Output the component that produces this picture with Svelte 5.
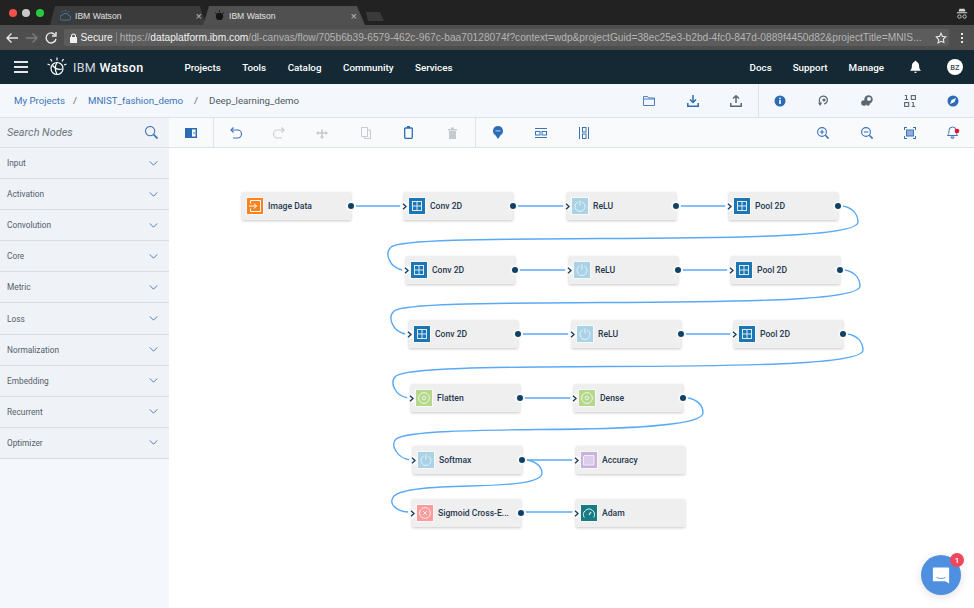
<script lang="ts">
	const palette = ['Input', 'Activation', 'Convolution', 'Core', 'Metric', 'Loss', 'Normalization', 'Embedding', 'Recurrent', 'Optimizer'];
	const primary = ['Projects', 'Tools', 'Catalog', 'Community', 'Services'];
	const secondary = ['Docs', 'Support', 'Manage'];

	// page coordinates of each node's top left corner
	const nodes = [
		{ label: 'Image Data', kind: 'data', x: 242, y: 192, input: false },
		{ label: 'Conv 2D', kind: 'grid', x: 404, y: 192 },
		{ label: 'ReLU', kind: 'power', x: 567, y: 192 },
		{ label: 'Pool 2D', kind: 'grid', x: 729, y: 192 },
		{ label: 'Conv 2D', kind: 'grid', x: 406, y: 256 },
		{ label: 'ReLU', kind: 'power', x: 569, y: 256 },
		{ label: 'Pool 2D', kind: 'grid', x: 731, y: 256 },
		{ label: 'Conv 2D', kind: 'grid', x: 409, y: 320 },
		{ label: 'ReLU', kind: 'power', x: 572, y: 320 },
		{ label: 'Pool 2D', kind: 'grid', x: 734, y: 320 },
		{ label: 'Flatten', kind: 'target', x: 411, y: 384 },
		{ label: 'Dense', kind: 'target', x: 574, y: 384 },
		{ label: 'Softmax', kind: 'power', x: 413, y: 446 },
		{ label: 'Accuracy', kind: 'square', x: 576, y: 446, output: false },
		{ label: 'Sigmoid Cross-E...', kind: 'cross', x: 412, y: 499 },
		{ label: 'Adam', kind: 'gauge', x: 576, y: 499, output: false }
	];

	const links = [
		'M355 206H401',
		'M517 206H564',
		'M680 206H726',
		'M842 206C852 207 858 214 858 222C858 235 770 238 600 238.5C480 239 400 240 391 247C384 254 390 268 403 270',
		'M519 270H566',
		'M682 270H728',
		'M844 270C854 271 860 278 860 286C860 299 772 302 602 302.5C482 303 403 304 394 311C387 318 393 332 406 334',
		'M522 334H569',
		'M685 334H731',
		'M847 334C857 335 863 342 863 350C863 363 775 366 605 366.5C490 367 405 368 396 376C389 382 395 396 408 398',
		'M524 398H571',
		'M687 398C697 399 703 405 703 413C703 426 625 429 540 429.5C480 430 405 431 396 439C390 445 397 458 410 460',
		'M526 460H573',
		'M526 460C536 461 542 467 542 473C542 483 510 485 470 486C430 487 402 489 394 496C388 503 395 511 408 512',
		'M525 512H573'
	];
</script>

<div class="page">
	<div class="tabstrip">
		<div class="lights"><i class="red"></i><i class="amber"></i><i class="green"></i></div>
		<div class="tab">
			<svg width="11" height="11" viewBox="0 0 12 12" fill="none" stroke="#3f7fb5"><path d="M2 11h7a2.500 2.500 0 0 0 .5-5A3.500 3.500 0 0 0 3 5.500 2.800 2.800 0 0 0 2 11z" /><path d="M6 0v1.500M2 1l1 1.500M10 1L9 2.500" /></svg>
			<span>IBM Watson</span><b>×</b>
		</div>
		<div class="tab active">
			<svg width="11" height="11" viewBox="0 0 12 12" fill="#161616"><circle cx="6" cy="7" r="4" /><path d="M1 3l2 1M11 3L9 4M6 0v2" stroke="#161616" /></svg>
			<span>IBM Watson</span><b>×</b>
		</div>
		<div class="newtab"></div>
		<svg class="incognito" width="12" height="12" viewBox="0 0 14 14" fill="#d8d8d8"><path d="M4 1h6l1 3H3zM1 5h12v1H1z" /><circle cx="4" cy="10" r="2" fill="none" stroke="#d8d8d8" /><circle cx="10" cy="10" r="2" fill="none" stroke="#d8d8d8" /></svg>
	</div>

	<div class="addressbar">
		<svg width="14" height="14" viewBox="0 0 14 14" fill="none" stroke="#e8e8e8" stroke-width="1.400"><path d="M13 7H2M6.500 2.500L2 7l4.500 4.500" /></svg>
		<svg width="14" height="14" viewBox="0 0 14 14" fill="none" stroke="#7d7d7d" stroke-width="1.400"><path d="M1 7h11M7.500 2.500L12 7l-4.500 4.500" /></svg>
		<svg width="14" height="14" viewBox="0 0 14 14" fill="none" stroke="#e8e8e8" stroke-width="1.400"><path d="M11.500 4.500A5 5 0 1 0 12 8" /><path d="M12 1v4H8" /></svg>
		<div class="omnibox">
			<svg width="9" height="10" viewBox="0 0 9 10" fill="#f0f0f0"><path d="M2 4V3a2.500 2.500 0 0 1 5 0v1h1v6H1V4zm1 0h3V3a1.500 1.500 0 0 0-3 0z" /></svg>
			<span class="secure">Secure</span>
			<span class="url"><em>https://</em>dataplatform.ibm.com<em>/dl-canvas/flow/705b6b39-6579-462c-967c-baa70128074f?context=wdp&amp;projectGuid=38ec25e3-b2bd-4fc0-847d-0889f4450d82&amp;projectTitle=MNIS...</em></span>
			<svg width="12" height="12" viewBox="0 0 14 14" fill="none" stroke="#e8e8e8" stroke-width="1.300"><path d="M7 1.500l1.700 3.600 3.800.5-2.800 2.700.7 3.900L7 10.800l-3.400 1.900.7-3.900L1.500 5.600l3.800-.5z" /></svg>
		</div>
		<div class="kebab"><i></i><i></i><i></i></div>
	</div>

	<header class="navbar">
		<div class="burger"><i></i><i></i><i></i></div>
		<svg class="logo" width="20" height="20" viewBox="0 0 20 20" fill="none" stroke="#fff" stroke-width="1.200"><circle cx="10" cy="11.500" r="6" /><path d="M5.500 8.500c3 3.500 6 4.500 9.500 3.500M10 5.500c-2 3-2 8 0 12M10 .5v3M3.500 2l1.500 2.500M16.500 2L15 4.500M.5 7l2.500 1M19.500 7l-2.500 1" /></svg>
		<div class="brand">IBM <strong>Watson</strong></div>
		<nav class="primary">
			{#each primary as item}<span>{item}</span>{/each}
		</nav>
		<nav class="secondary">
			{#each secondary as item}<span>{item}</span>{/each}
		</nav>
		<svg class="bell" width="11" height="14" viewBox="0 0 13 15" fill="#fff"><path d="M6.500 0a1.200 1.200 0 0 1 1.200 1.300C10 2 10.800 4 10.800 6.500c0 2.500.7 3.800 2.200 5.500H0c1.500-1.700 2.200-3 2.200-5.500S3 2 5.300 1.300A1.200 1.200 0 0 1 6.500 0zM5 13h3a1.500 1.500 0 0 1-3 0z" /></svg>
		<div class="avatar">BZ</div>
	</header>

	<div class="crumbbar">
		<div class="crumbs">
			<a class="root" href="#top">My Projects</a><span class="sep">/</span><a href="#top">MNIST_fashion_demo</a><span class="sep">/</span><span class="current">Deep_learning_demo</span>
		</div>
		<div class="slots crumb-actions">
			<svg width="12" height="10" viewBox="0 0 12 10" fill="none" stroke="#4a7fc1" stroke-width="1"><path d="M.5 9.500V.5h4l1 1.500h6v7.500zM.5 3h11" /></svg>
			<svg width="12" height="12" viewBox="0 0 12 12" fill="none" stroke="#2f6db5" stroke-width="1.500"><path d="M6 0v7M3 4.500L6 7.500l3-3" /><path d="M.8 8v3.200h10.400V8" /></svg>
			<svg width="12" height="12" viewBox="0 0 12 12" fill="none" stroke="#5c6670" stroke-width="1.500"><path d="M6 8V1M3 3.500L6 .8l3 2.700" /><path d="M.8 8v3.200h10.400V8" /></svg>
		</div>
		<div class="slots crumb-tools">
			<svg width="12" height="12" viewBox="0 0 12 12"><circle cx="6" cy="6" r="5.500" fill="#2c6cb5" /><rect x="5.200" y="5" width="1.600" height="4" fill="#fff" /><rect x="5.200" y="2.700" width="1.600" height="1.500" fill="#fff" /></svg>
			<svg width="12" height="12" viewBox="0 0 12 12" fill="none" stroke="#5c6670" stroke-width="1.200"><path d="M3.200 7.500A4 4 0 1 1 7 9" /><circle cx="7" cy="5" r="1" fill="#5c6670" /><path d="M1 7.500h4.200L3.100 11z" fill="#5c6670" stroke="none" /></svg>
			<svg width="12" height="12" viewBox="0 0 12 12" fill="#5c6670"><circle cx="7.500" cy="4.500" r="4.200" /><circle cx="3" cy="8" r="2.800" /><circle cx="7" cy="9" r="1.800" /><circle cx="8" cy="4" r="2" fill="#f4f7fb" /></svg>
			<svg width="12" height="12" viewBox="0 0 12 12" fill="none" stroke="#5c6670" stroke-width="1.100"><path d="M.8.500h1.700v4M.8 4.500h3.400" /><rect x="7.300" y=".6" width="4.100" height="3.800" /><rect x=".6" y="7.600" width="4.100" height="3.800" /><path d="M9.300 7.500v4M7.700 11.500h3.400M7.900 7.500h1.400" /></svg>
			<svg width="12" height="12" viewBox="0 0 12 12"><circle cx="6" cy="6" r="5.500" fill="#2c6cb5" /><path d="M3 9l1.500-4L9 3 7.500 7z" fill="#fff" /></svg>
		</div>
	</div>

	<div class="workspace">
		<aside class="sidebar">
			<div class="search">
				<span>Search Nodes</span>
				<svg width="13" height="13" viewBox="0 0 14 14" fill="none" stroke="#3b73b8" stroke-width="1.100"><circle cx="5.500" cy="5.500" r="5" /><path d="M9.300 9.300L13.500 13.500" stroke-width="1.800" /></svg>
			</div>
			{#each palette as group}
				<div class="group">
					<span>{group}</span>
					<svg width="9" height="5" viewBox="0 0 10 6" fill="none" stroke="#3b73b8" stroke-width="1.100"><path d="M.5.500L5 5l4.500-4.500" /></svg>
				</div>
			{/each}
		</aside>

		<main class="stage">
			<div class="toolbar">
				<div class="tb-panel">
					<svg width="12" height="10" viewBox="0 0 12 10"><rect width="12" height="10" fill="#2c6cb5" /><rect x="7" y="1.500" width="3.500" height="7" fill="#fff" /><path d="M9.500 3.500L8 5l1.500 1.500z" fill="#2c6cb5" /></svg>
				</div>
				<div class="slots tb-edit">
					<svg width="12" height="12" viewBox="0 0 12 12" fill="none" stroke="#3b73b8" stroke-width="1.100"><path d="M3 11h4.500a4 4 0 0 0 0-8H1" /><path d="M3.500.5L1 3l2.500 2.500" /></svg>
					<svg width="12" height="12" viewBox="0 0 12 12" fill="none" stroke="#c5cad0" stroke-width="1.100"><path d="M9 11H4.500a4 4 0 0 1 0-8H11" /><path d="M8.500.5L11 3 8.500 5.500" /></svg>
					<svg width="12" height="12" viewBox="0 0 12 12" fill="#c5cad0"><path d="M5.200 2.500h1.600v2.700h2.700V3.700L12 6 9.500 8.300V6.800H6.800v2.700h1.500L6 12 3.700 9.500h1.500V6.800H2.500v1.500L0 6l2.500-2.300v1.500h2.700z" /></svg>
					<svg width="10" height="12" viewBox="0 0 10 12" fill="none" stroke="#c5cad0" stroke-width="1"><path d="M.5.500h6v9h-6zM6.500 3h3v8.500h-6v-2" /></svg>
					<svg width="9" height="13" viewBox="0 0 9 13" fill="none" stroke="#2c6cb5" stroke-width="1.300"><rect x=".7" y="2" width="7.600" height="10.300" rx=".8" /><path d="M3 1h3" stroke-width="2" /></svg>
					<svg width="9" height="12" viewBox="0 0 9 12" fill="#c5cad0"><path d="M0 2h9v1.500H0zM3 .5h3V2H3zM1 4h7v8H1z" /></svg>
				</div>
				<div class="slots tb-align">
					<svg width="10" height="13" viewBox="0 0 10 13"><path d="M5 0a5 5 0 0 1 2.500 9.300L5 13 2.500 9.300A5 5 0 0 1 5 0z" fill="#2c6cb5" /><rect x="2.500" y="4.200" width="5" height="1.300" fill="#9bbbe0" /></svg>
					<svg width="12" height="10" viewBox="0 0 12 10" fill="none" stroke="#3b73b8"><path d="M0 .5h12M0 9.500h12" /><rect x=".5" y="3.500" width="4.500" height="3.500" /><rect x="7" y="3.500" width="4.500" height="3.500" /></svg>
					<svg width="10" height="12" viewBox="0 0 10 12" fill="none" stroke="#3b73b8"><path d="M.5 0v12M9.500 0v12" /><rect x="3.500" y=".5" width="3.500" height="4.500" /><rect x="3.500" y="7" width="3.500" height="4.500" /></svg>
				</div>
				<div class="slots tb-view">
					<svg width="12" height="12" viewBox="0 0 12 12" fill="none" stroke="#3b73b8" stroke-width="1.100"><circle cx="5" cy="5" r="4.400" /><path d="M2.800 5h4.400M5 2.800v4.400" /><path d="M8.300 8.300L11.600 11.600" stroke-width="1.600" /></svg>
					<svg width="12" height="12" viewBox="0 0 12 12" fill="none" stroke="#3b73b8" stroke-width="1.100"><circle cx="5" cy="5" r="4.400" /><path d="M2.800 5h4.400" /><path d="M8.300 8.300L11.600 11.600" stroke-width="1.600" /></svg>
					<svg width="12" height="12" viewBox="0 0 12 12" fill="none" stroke="#3b73b8"><path d="M0 .5h3M9 .5h3M0 11.500h3M9 11.500h3M.5 0v3M11.500 0v3M.5 9v3M11.500 9v3" /><rect x="2.500" y="3" width="7" height="6" fill="#8db0da" /></svg>
					<svg width="13" height="13" viewBox="0 0 13 13"><path d="M5.500 1a3.500 3.500 0 0 1 3.500 3.500c0 2.500.5 3.700 1.500 5h-10c1-1.300 1.500-2.500 1.500-5A3.500 3.500 0 0 1 5.500 1zM4 11h3a1.500 1.500 0 0 1-3 0z" fill="none" stroke="#3b73b8" /><circle cx="10" cy="5" r="2.300" fill="#e8112d" /></svg>
				</div>
			</div>

			<div class="canvas">
				<svg class="links" width="805" height="460" viewBox="169 148 805 460" fill="none" stroke="#5aa9f7" stroke-width="1.400">
					{#each links as d}<path {d} />{/each}
				</svg>

				{#each nodes as node}
					<div class="node" style="left: {node.x - 169}px; top: {node.y - 148}px">
						{#if node.input !== false}
							<span class="port-in"><svg width="5" height="7" viewBox="0 0 5 7" fill="none" stroke="#173c5c" stroke-width="1.300"><path d="M1 .8L4 3.500 1 6.200" /></svg></span>
						{/if}
						<span class="badge {node.kind}">
							{#if node.kind === 'grid'}
								<svg width="10" height="10" viewBox="0 0 10 10" fill="none" stroke="#dcebf6" stroke-width="1"><rect x=".5" y=".5" width="9" height="9" /><path d="M5 .5v9M.5 5h9" /></svg>
							{:else if node.kind === 'power'}
								<svg width="12" height="12" viewBox="0 0 12 12" fill="none" stroke="#e6f2f8" stroke-width="1"><path d="M3.700 2a5 5 0 1 0 4.600 0M6 .5v5" /></svg>
							{:else if node.kind === 'data'}
								<svg width="12" height="12" viewBox="0 0 12 12" fill="none" stroke="#fff" stroke-width="1"><path d="M1.500 3.500V.5h10v11h-10V8.500M0 6h7.500M5 3.500L7.500 6 5 8.500" /></svg>
							{:else if node.kind === 'target'}
								<svg width="12" height="12" viewBox="0 0 12 12" fill="none" stroke="#eef6e4" stroke-width="1"><circle cx="6" cy="6" r="5.400" /><circle cx="6" cy="6" r="1.800" /></svg>
							{:else if node.kind === 'square'}
								<svg width="12" height="12" viewBox="0 0 12 12" fill="#dccdec" stroke="#f4eefa" stroke-width="1"><path d="M1.500 1.500H11v9.500H.5V2.500z" /></svg>
							{:else if node.kind === 'cross'}
								<svg width="12" height="12" viewBox="0 0 12 12" fill="none" stroke="#fdeaea" stroke-width="1"><circle cx="6" cy="6" r="5.400" /><path d="M4 4l4 4M8 4l-4 4" /></svg>
							{:else if node.kind === 'gauge'}
								<svg width="12" height="10" viewBox="0 0 12 10" fill="none" stroke="#e4f3f3" stroke-width="1"><path d="M1.300 9.500a5.500 5.500 0 1 1 9.400 0" /><path d="M6 7l2-3" stroke-width="1.300" /></svg>
							{/if}
						</span>
						<span class="label">{node.label}</span>
						{#if node.output !== false}
							<span class="port-out"></span>
						{/if}
					</div>
				{/each}
			</div>
		</main>
	</div>

	<div class="chat">
		<svg width="18" height="19" viewBox="0 0 20 20"><path d="M2 1h16a1 1 0 0 1 1 1v17l-4-2.500H2a1 1 0 0 1-1-1V2a1 1 0 0 1 1-1z" fill="#fff" /><path d="M5 12c3 1.800 7 1.800 10 0" fill="none" stroke="#4f8fe0" /></svg>
		<span class="count">1</span>
	</div>
</div>

<style>
	:global(body) {
		margin: 0;
		background: #fff;
	}

	.page {
		position: relative;
		width: 974px;
		height: 608px;
		overflow: hidden;
		font-family: Roboto, 'Noto Sans', sans-serif;
		display: flex;
		flex-direction: column;
	}

	/* browser chrome */
	.tabstrip {
		height: 25px;
		background: #222;
		display: flex;
		align-items: flex-end;
		font-family: 'Liberation Sans', sans-serif;
		font-size: 8.600px;
		color: #e2e2e2;
		flex: none;
	}

	.lights {
		display: flex;
		gap: 5.500px;
		padding: 0 0 8px 8.500px;
		width: 41.500px;
	}

	.lights i {
		width: 8px;
		height: 8px;
		border-radius: 50%;
	}

	.red { background: #f2514b; }
	.amber { background: #c9c9c9; }
	.green { background: #27c93f; }

	.tab {
		width: 156px;
		height: 19px;
		margin-right: -3px;
		padding: 0 4px 0 10px;
		box-sizing: border-box;
		background: #3b3b3b;
		clip-path: polygon(5px 0, calc(100% - 6px) 0, 100% 100%, 0 100%);
		display: flex;
		align-items: center;
		gap: 4px;
	}

	.tab span {
		flex: 1;
	}

	.tab b {
		font-weight: 400;
		font-size: 11px;
		color: #bdbdbd;
	}

	.tab.active {
		background: #505050;
		width: 162px;
		margin-right: 0;
		padding-left: 11px;
		padding-right: 8px;
		clip-path: polygon(6px 0, calc(100% - 8px) 0, 100% 100%, 0 100%);
	}

	.newtab {
		width: 20px;
		height: 9px;
		margin: 0 0 4px -1px;
		background: #3a3a3a;
		clip-path: polygon(2px 0, 16px 0, 100% 100%, 4px 100%);
	}

	.incognito {
		margin: 0 6px 5px auto;
	}

	.addressbar {
		height: 25px;
		background: #4e4e4e;
		display: flex;
		align-items: center;
		padding: 0 5px;
		gap: 5.500px;
		box-sizing: border-box;
		flex: none;
	}

	.omnibox {
		width: 885px;
		height: 17px;
		background: #5c5c5c;
		border-radius: 2px;
		box-sizing: border-box;
		padding: 0 2px 0 5px;
		display: flex;
		align-items: center;
		font-family: 'Liberation Sans', sans-serif;
		font-size: 10.200px;
		color: #f2f2f2;
	}

	.secure {
		margin-left: 3px;
		padding-right: 3px;
		margin-right: 3px;
		border-right: 1px solid #808080;
	}

	.url {
		flex: 1;
		white-space: nowrap;
	}

	.url em {
		font-style: normal;
		color: #b4b4b4;
	}

	.kebab {
		display: flex;
		flex-direction: column;
		gap: 2px;
		margin-left: 7px;
	}

	.kebab i {
		width: 2px;
		height: 2px;
		background: #e8e8e8;
	}

	/* product header */
	.navbar {
		height: 34px;
		background: #152935;
		color: #fff;
		display: flex;
		align-items: center;
		font-size: 9.800px;
		font-weight: 500;
		flex: none;
	}

	.burger {
		display: flex;
		flex-direction: column;
		gap: 3px;
		margin-left: 14px;
	}

	.burger i {
		width: 14px;
		height: 2px;
		background: #e6e6e6;
	}

	.logo {
		margin-left: 19px;
	}

	.brand {
		margin-left: 6px;
		font-size: 12.500px;
		font-weight: 400;
		letter-spacing: 0.300px;
		color: #d6dbdf;
	}

	.brand strong {
		font-weight: 500;
		color: #fff;
	}

	.primary {
		display: flex;
		gap: 21.500px;
		margin-left: 41px;
	}

	.secondary {
		display: flex;
		gap: 21px;
		margin-left: auto;
	}

	.bell {
		margin-left: 26px;
	}

	.avatar {
		width: 16px;
		height: 16px;
		margin: 0 11px 0 26px;
		border-radius: 50%;
		background: #fff;
		color: #3d4a55;
		font-size: 7.500px;
		display: grid;
		place-items: center;
	}

	/* evenly spaced icon buttons */
	.slots {
		display: grid;
		grid-auto-flow: column;
		grid-auto-columns: 43.300px;
		justify-items: center;
		align-items: center;
		height: 100%;
	}

	/* breadcrumbs */
	.crumbbar {
		height: 34px;
		background: #f4f7fb;
		border-bottom: 1px solid #dfe3e8;
		box-sizing: border-box;
		display: flex;
		align-items: center;
		flex: none;
		font-size: 9.700px;
	}

	.crumbs {
		margin-left: 14px;
		display: flex;
		align-items: center;
	}

	.crumbs a {
		color: #3b73b8;
		text-decoration: none;
	}

	.crumbs .root {
		margin-right: -3px;
	}

	.sep {
		margin: 0 11px;
		color: #5c6670;
	}

	.current {
		color: #4f5a64;
	}

	.crumb-actions {
		margin-left: auto;
		border-right: 1px solid #dfe3e8;
	}

	.crumb-tools {
		margin-right: -1px;
	}

	.workspace {
		flex: 1;
		display: flex;
		min-height: 0;
	}

	/* node palette */
	.sidebar {
		width: 169px;
		background: #f4f7fb;
		flex: none;
	}

	.search {
		height: 30px;
		background: #eff2f7;
		border-bottom: 1px solid #dfe3e8;
		box-sizing: border-box;
		display: flex;
		align-items: center;
		justify-content: space-between;
		padding: 0 11px 0 7px;
		font-size: 10.900px;
		font-style: italic;
		color: #6d7680;
	}

	.group {
		height: 31.100px;
		background: #eff2f7;
		border-bottom: 1px solid #d8dde3;
		box-sizing: border-box;
		display: flex;
		align-items: center;
		justify-content: space-between;
		padding: 0 11px 0 7px;
		font-size: 8.300px;
		color: #55606a;
	}

	.stage {
		flex: 1;
		display: flex;
		flex-direction: column;
		min-width: 0;
	}

	.toolbar {
		height: 30px;
		background: #f9fafc;
		border-bottom: 1px solid #dfe3e8;
		box-sizing: border-box;
		display: flex;
		align-items: center;
		flex: none;
	}

	.tb-panel {
		width: 44px;
		height: 100%;
		flex: none;
		display: flex;
		align-items: center;
		justify-content: center;
		border-right: 1px solid #dfe3e8;
	}

	.tb-edit {
		width: 261px;
		border-right: 1px solid #dfe3e8;
	}

	.tb-view {
		margin-left: auto;
		margin-right: -1px;
	}

	/* flow canvas */
	.canvas {
		position: relative;
		flex: 1;
		background: #fff;
	}

	.links {
		position: absolute;
		inset: 0;
	}

	.node {
		position: absolute;
		width: 109px;
		height: 28px;
		background: #efefef;
		box-shadow: 0 1px 3px rgba(0, 0, 0, 0.22);
		border-radius: 1px;
		display: flex;
		align-items: center;
		padding-left: 4px;
		box-sizing: border-box;
	}

	.badge {
		width: 18px;
		height: 18px;
		box-sizing: border-box;
		border: 1px solid #f8f8f8;
		display: grid;
		place-items: center;
		flex: none;
	}

	.grid { background: #1c75b4; }
	.power { background: #a9d2e6; }
	.data { background: #fb8420; }
	.target { background: #b4d78b; }
	.square { background: #c9b3dc; }
	.cross { background: #fb9a9a; }
	.gauge { background: #177c85; }

	.label {
		margin: -1px 0 0 4px;
		font-size: 8.600px;
		font-weight: 500;
		color: #24384f;
		white-space: nowrap;
	}

	.port-in {
		position: absolute;
		left: -4px;
		top: 9.500px;
		width: 9px;
		height: 9px;
		border-radius: 50%;
		background: #f8f8f8;
		display: grid;
		place-items: center;
	}

	.port-out {
		position: absolute;
		right: -5px;
		top: 9px;
		width: 6px;
		height: 6px;
		border: 2px solid #f8f8f8;
		border-radius: 50%;
		background: #0f4166;
	}

	/* floating chat button */
	.chat {
		position: absolute;
		left: 921px;
		top: 555px;
		width: 40px;
		height: 40px;
		border-radius: 50%;
		background: #4f8fe0;
		box-shadow: 0 2px 10px rgba(0, 0, 0, 0.12);
		display: grid;
		place-items: center;
	}

	.count {
		position: absolute;
		left: 29px;
		top: -2px;
		width: 14px;
		height: 14px;
		border-radius: 50%;
		background: #f0475c;
		color: #fff;
		font-size: 8px;
		font-weight: 600;
		display: grid;
		place-items: center;
	}
</style>
